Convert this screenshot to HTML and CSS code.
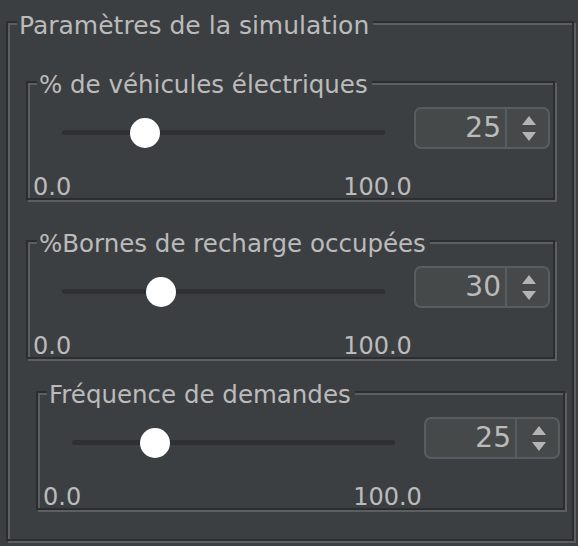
FILE: index.html
```html
<!DOCTYPE html>
<html lang="fr">
<head>
<meta charset="utf-8">
<title>Paramètres de la simulation</title>
<link rel="stylesheet" href="styles.css">
</head>
<body>
<div class="group outer">
  <span class="title main-title">Paramètres de la simulation</span>

  <div class="group panel p1">
    <span class="title">% de véhicules électriques</span>
    <div class="row">
      <div class="slider">
        <div class="track"></div>
        <div class="knob" style="left: calc(25% - 13px)"></div>
      </div>
      <div class="spinner">
        <div class="value">25</div>
        <div class="arrows"><span class="up"></span><span class="down"></span></div>
      </div>
    </div>
    <div class="labels"><span>0.0</span><span>100.0</span></div>
  </div>

  <div class="group panel p2">
    <span class="title">%Bornes de recharge occupées</span>
    <div class="row">
      <div class="slider">
        <div class="track"></div>
        <div class="knob" style="left: calc(30% - 13px)"></div>
      </div>
      <div class="spinner">
        <div class="value">30</div>
        <div class="arrows"><span class="up"></span><span class="down"></span></div>
      </div>
    </div>
    <div class="labels"><span>0.0</span><span>100.0</span></div>
  </div>

  <div class="group panel p3">
    <span class="title">Fréquence de demandes</span>
    <div class="row">
      <div class="slider">
        <div class="track"></div>
        <div class="knob" style="left: calc(25% - 13px)"></div>
      </div>
      <div class="spinner">
        <div class="value">25</div>
        <div class="arrows"><span class="up"></span><span class="down"></span></div>
      </div>
    </div>
    <div class="labels"><span>0.0</span><span>100.0</span></div>
  </div>
</div>
</body>
</html>
```

FILE: styles.css
```css
* { box-sizing: border-box; }

html, body {
  margin: 0;
  padding: 0;
  background: #3c3f41;
  width: 578px;
  height: 546px;
  overflow: hidden;
}

body {
  font-family: "DejaVu Sans", sans-serif;
  font-size: 24px;
  color: #bbbbbb;
}

.group {
  position: relative;
  border: 2px solid #2b2d2e;
  box-shadow: inset 2px 2px 0 #5c5f61, 2px 2px 0 #5c5f61;
}

.title {
  position: absolute;
  top: -12px;
  left: 9px;
  font-size: 24.5px;
  line-height: 28px;
  padding: 0 4px 0 2px;
  background: #3c3f41;
  white-space: nowrap;
}

.main-title {
  font-size: 25px;
  top: -11px;
}

.outer {
  margin: 21px 0 0 6px;
  width: 568px;
  height: 520px;
  padding: 58px 0 0 18px;
}

.panel {
  width: 529px;
  height: 119px;
}

.p2 { margin-top: 40px; }
.p3 { margin-top: 32px; margin-left: 10px; }

.row {
  display: flex;
  align-items: flex-start;
  margin-top: 24px;
}

.slider {
  position: relative;
  width: 323px;
  height: 42px;
  margin-left: 34px;
}

.track {
  position: absolute;
  left: 0;
  right: 0;
  top: 23px;
  height: 5px;
  border-radius: 3px;
  background: #2e3032;
}

.knob {
  position: absolute;
  top: 11px;
  width: 30px;
  height: 30px;
  border-radius: 50%;
  background: #ffffff;
}

.spinner {
  display: flex;
  margin-left: 29px;
  width: 136px;
  height: 42px;
  border: 2px solid #5a5d5f;
  border-radius: 7px;
  background: #45494a;
}

.value {
  flex: 1;
  text-align: right;
  font-size: 28px;
  line-height: 38px;
  padding-right: 4px;
  border-right: 2px solid #5a5d5f;
}

.arrows {
  width: 41px;
  display: flex;
  flex-direction: column;
  align-items: center;
  justify-content: center;
  gap: 7px;
  padding-left: 3px;
}

.up {
  width: 0;
  height: 0;
  border-left: 7.5px solid transparent;
  border-right: 7.5px solid transparent;
  border-bottom: 9px solid #b4b4b4;
}

.down {
  width: 0;
  height: 0;
  border-left: 7.5px solid transparent;
  border-right: 7.5px solid transparent;
  border-top: 9px solid #b4b4b4;
}

.labels {
  display: flex;
  gap: 272px;
  margin-top: 26px;
  padding-left: 5px;
  line-height: 24px;
}
```
